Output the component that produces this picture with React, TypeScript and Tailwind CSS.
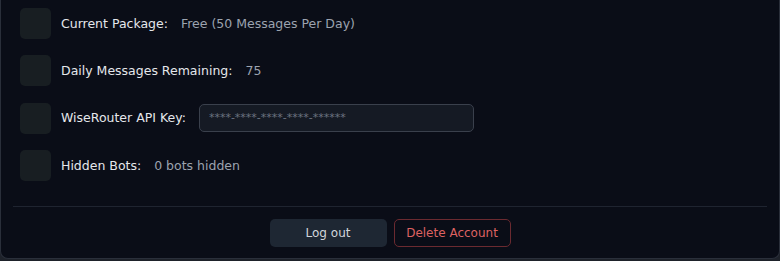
import React from "react";

function Row({ label, children }: { label: string; children: React.ReactNode }) {
  return (
    <div className="flex items-center h-[31px]">
      <div className="w-[31px] h-[31px] rounded-[5px] bg-[#181e22]" />
      <div className="ml-[10px] flex items-center">
        <div className="pt-[1.5px] text-[12.5px] text-[#e5e7eb] font-medium">{label}</div>
        {children}
      </div>
    </div>
  );
}

export default function App() {
  return (
    <div className="w-[780px] h-[261px] bg-[#1e222a] overflow-hidden" style={{ fontFamily: '"DejaVu Sans", sans-serif' }}>
      <div className="h-[259px] bg-[#0a0d17] border-x border-b border-[#2a2f3a] rounded-b-[8px] flex flex-col">
        <div className="pl-[19px] pt-[8px] flex flex-col gap-[16.3px]">
          <Row label="Current Package:">
            <span className="ml-[13px] pt-[1.5px] text-[12.5px] text-[#9ca3af]">Free (50 Messages Per Day)</span>
          </Row>
          <Row label="Daily Messages Remaining:">
            <span className="ml-[13px] pt-[1.5px] text-[12.5px] text-[#9ca3af]">75</span>
          </Row>
          <Row label="WiseRouter API Key:">
            <div className="ml-[13px] w-[275px] h-[28px] rounded-[5px] border border-[#3a404c] bg-[#151a24] flex items-center px-[9px] text-[11px] text-[#6b7280]">
              ****-****-****-****-******
            </div>
          </Row>
          <Row label="Hidden Bots:">
            <span className="ml-[13px] pt-[1.5px] text-[12.5px] text-[#9ca3af]">0 bots hidden</span>
          </Row>
        </div>
        <div className="mx-[12px] mt-[25px] h-px bg-[#1f2430]" />
        <div className="flex justify-center gap-[7px] mt-[12px]">
          <button className="w-[117px] h-[28px] rounded-[5px] bg-[#1e2733] text-[12px] text-[#d1d5db]">Log out</button>
          <button className="w-[117px] h-[28px] rounded-[5px] border border-[#6b2a30] text-[12px] text-[#dd6262]">Delete Account</button>
        </div>
      </div>
    </div>
  );
}
